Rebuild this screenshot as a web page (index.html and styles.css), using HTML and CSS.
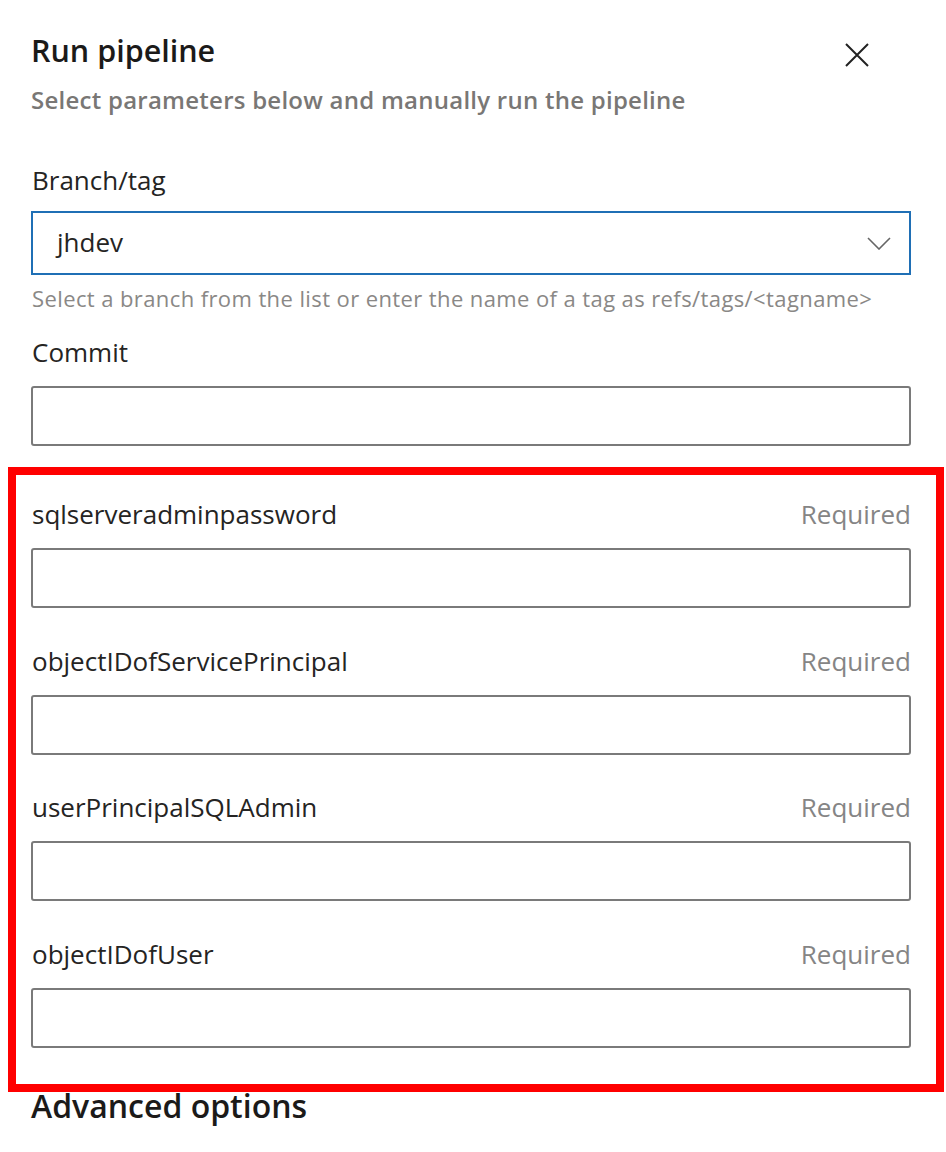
FILE: index.html
```html
<!DOCTYPE html>
<html lang="en">
<head>
<meta charset="utf-8">
<title>Run pipeline</title>
<link rel="stylesheet" href="styles.css">
</head>
<body>
<div class="panel">
  <div class="header">
    <h1 class="title">Run pipeline</h1>
    <button class="close" aria-label="Close">
      <svg width="24" height="24" viewBox="0 0 24 24"><path d="M1 1 L23 23 M23 1 L1 23" stroke="#222" stroke-width="2" fill="none"/></svg>
    </button>
  </div>
  <p class="subtitle">Select parameters below and manually run the pipeline</p>

  <div class="field branch">
    <div class="label-row"><span class="label">Branch/tag</span></div>
    <div class="select">
      <span class="select-value">jhdev</span>
      <svg class="chevron" width="24" height="13" viewBox="0 0 24 13"><path d="M1 1 L12 12 L23 1" stroke="#666" stroke-width="1.6" fill="none"/></svg>
    </div>
    <div class="helper">Select a branch from the list or enter the name of a tag as refs/tags/&lt;tagname&gt;</div>
  </div>

  <div class="field commit">
    <div class="label-row"><span class="label">Commit</span></div>
    <div class="input"></div>
  </div>

  <div class="highlight">
    <div class="field param">
      <div class="label-row"><span class="label">sqlserveradminpassword</span><span class="required">Required</span></div>
      <div class="input"></div>
    </div>
    <div class="field param">
      <div class="label-row"><span class="label">objectIDofServicePrincipal</span><span class="required">Required</span></div>
      <div class="input"></div>
    </div>
    <div class="field param">
      <div class="label-row"><span class="label">userPrincipalSQLAdmin</span><span class="required">Required</span></div>
      <div class="input"></div>
    </div>
    <div class="field param">
      <div class="label-row"><span class="label">objectIDofUser</span><span class="required">Required</span></div>
      <div class="input"></div>
    </div>
  </div>

  <h2 class="advanced">Advanced options</h2>
</div>
</body>
</html>
```

FILE: styles.css
```css
* { box-sizing: border-box; }
html, body { margin: 0; padding: 0; background: #fff; }
body {
  font-family: "Open Sans", "Noto Sans", sans-serif;
  color: #201f1e;
}
.panel {
  padding: 30px 35px 30px 31px;
  width: 946px;
}
.header {
  display: flex;
  justify-content: space-between;
  align-items: flex-start;
}
.title {
  margin: 0;
  font-size: 30.5px;
  line-height: 40px;
  font-weight: 600;
  color: #1b1a19;
}
.close {
  border: 0;
  background: none;
  padding: 0;
  margin: 13px 42px 0 0;
  width: 24px;
  height: 24px;
  display: block;
}
.close svg { display: block; }
.subtitle {
  margin: 15px 0 0 0;
  font-size: 24px;
  line-height: 30px;
  font-weight: 600;
  color: #797775;
  letter-spacing: 0.25px;
}
.field { display: flex; flex-direction: column; }
.label-row {
  display: flex;
  justify-content: space-between;
  align-items: center;
  height: 32px;
  font-size: 26px;
  line-height: 32px;
  padding-left: 1px;
}
.label { color: #252423; }
.required { color: #858585; }
.branch { margin-top: 49px; }
.branch .label-row { margin-bottom: 15px; }
.select {
  height: 64px;
  border: 2px solid #1f6fb5;
  display: flex;
  align-items: center;
  justify-content: space-between;
  padding: 0 18px 0 24px;
}
.select-value { font-size: 26px; color: #252423; padding-bottom: 3px; }
.chevron { display: block; }
.helper {
  margin-top: 9px;
  font-size: 22px;
  line-height: 28px;
  color: #8a8886;
  letter-spacing: 0.4px;
  padding-left: 1px;
}
.commit { margin-top: 24px; }
.commit .label-row { margin-bottom: 18px; }
.input {
  height: 60px;
  border: 2px solid #7a7a7a;
  border-radius: 3px;
  background: #fff;
}
.highlight {
  margin: 21px -33px 0 -23px;
  border: 8px solid #ff0000;
  padding: 23px 25px 36px 15px;
}
.param .label-row { margin-bottom: 18px; }
.param + .param { margin-top: 36.5px; }
.advanced {
  margin: -6px 0 0 0;
  font-size: 32px;
  line-height: 40px;
  font-weight: 600;
  color: #1b1a19;
}
```
